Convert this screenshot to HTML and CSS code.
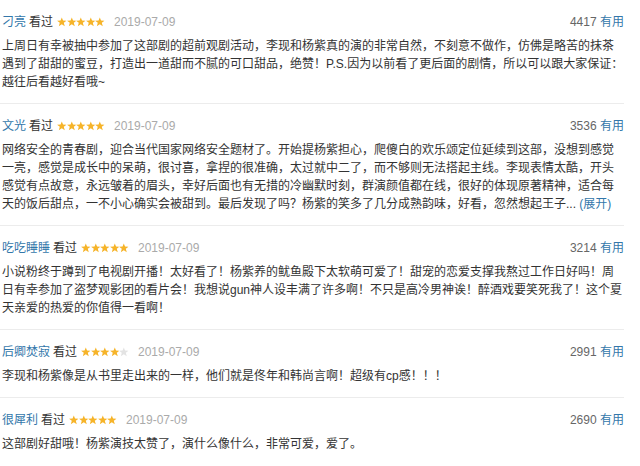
FILE: index.html
```html
<!DOCTYPE html>
<html lang="zh-CN">
<head>
    <meta charset="UTF-8">
    <title>短评</title>
    <link rel="stylesheet" href="styles.css">
</head>
<body>
    <svg class="defs" width="0" height="0">
        <symbol id="star" viewBox="0 0 10 10">
            <polygon points="5,0.2 6.3,3.5 9.9,3.6 7.1,5.8 8.1,9.4 5,7.3 1.9,9.4 2.9,5.8 0.1,3.6 3.7,3.5"/>
        </symbol>
    </svg>

    <div class="comments">
        <div class="comment">
            <div class="comment-info">
                <a class="name">刁亮</a>
                <span class="watched">看过</span>
                <span class="stars"><svg class="on"><use href="#star"/></svg><svg class="on"><use href="#star"/></svg><svg class="on"><use href="#star"/></svg><svg class="on"><use href="#star"/></svg><svg class="on"><use href="#star"/></svg></span>
                <span class="time">2019-07-09</span>
                <span class="votes"><span class="count">4417</span> <a>有用</a></span>
            </div>
            <p class="short">上周日有幸被抽中参加了这部剧的超前观剧活动，李现和杨紫真的演的非常自然，不刻意不做作，仿佛是略苦的抹茶<br>遇到了甜甜的蜜豆，打造出一道甜而不腻的可口甜品，绝赞！P.S.因为以前看了更后面的剧情，所以可以跟大家保证：<br>越往后看越好看哦~</p>
        </div>

        <div class="comment">
            <div class="comment-info">
                <a class="name">文光</a>
                <span class="watched">看过</span>
                <span class="stars"><svg class="on"><use href="#star"/></svg><svg class="on"><use href="#star"/></svg><svg class="on"><use href="#star"/></svg><svg class="on"><use href="#star"/></svg><svg class="on"><use href="#star"/></svg></span>
                <span class="time">2019-07-09</span>
                <span class="votes"><span class="count">3536</span> <a>有用</a></span>
            </div>
            <p class="short">网络安全的青春剧，迎合当代国家网络安全题材了。开始提杨紫担心，爬傻白的欢乐颂定位延续到这部，没想到感觉<br>一亮，感觉是成长中的呆萌，很讨喜，拿捏的很准确，太过就中二了，而不够则无法搭起主线。李现表情太酷，开头<br>感觉有点故意，永远皱着的眉头，幸好后面也有无措的冷幽默时刻，群演颜值都在线，很好的体现原著精神，适合每<br>天的饭后甜点，一不小心确实会被甜到。最后发现了吗？杨紫的笑多了几分成熟韵味，好看，忽然想起王子... <a class="more">(展开)</a></p>
        </div>

        <div class="comment">
            <div class="comment-info">
                <a class="name">吃吃睡睡</a>
                <span class="watched">看过</span>
                <span class="stars"><svg class="on"><use href="#star"/></svg><svg class="on"><use href="#star"/></svg><svg class="on"><use href="#star"/></svg><svg class="on"><use href="#star"/></svg><svg class="on"><use href="#star"/></svg></span>
                <span class="time">2019-07-09</span>
                <span class="votes"><span class="count">3214</span> <a>有用</a></span>
            </div>
            <p class="short">小说粉终于蹲到了电视剧开播！太好看了！杨紫养的鱿鱼殿下太软萌可爱了！甜宠的恋爱支撑我熬过工作日好吗！周<br>日有幸参加了盗梦观影团的看片会！我想说gun神人设丰满了许多啊！不只是高冷男神诶！醉酒戏要笑死我了！这个夏<br>天亲爱的热爱的你值得一看啊！</p>
        </div>

        <div class="comment">
            <div class="comment-info">
                <a class="name">后卿焚寂</a>
                <span class="watched">看过</span>
                <span class="stars"><svg class="on"><use href="#star"/></svg><svg class="on"><use href="#star"/></svg><svg class="on"><use href="#star"/></svg><svg class="on"><use href="#star"/></svg><svg class="off"><use href="#star"/></svg></span>
                <span class="time">2019-07-09</span>
                <span class="votes"><span class="count">2991</span> <a>有用</a></span>
            </div>
            <p class="short">李现和杨紫像是从书里走出来的一样，他们就是佟年和韩尚言啊！超级有cp感！！！</p>
        </div>

        <div class="comment">
            <div class="comment-info">
                <a class="name">很犀利</a>
                <span class="watched">看过</span>
                <span class="stars"><svg class="on"><use href="#star"/></svg><svg class="on"><use href="#star"/></svg><svg class="on"><use href="#star"/></svg><svg class="on"><use href="#star"/></svg><svg class="on"><use href="#star"/></svg></span>
                <span class="time">2019-07-09</span>
                <span class="votes"><span class="count">2690</span> <a>有用</a></span>
            </div>
            <p class="short">这部剧好甜哦！杨紫演技太赞了，演什么像什么，非常可爱，爱了。</p>
        </div>
    </div>
</body>
</html>
```

FILE: styles.css
```css
body, html {
    margin: 0;
    padding: 0;
    background-color: #fff;
    overflow: hidden;
}
.defs {
    position: absolute;
    width: 0;
    height: 0;
}
.comments {
    width: 624px;
    font-family: "Liberation Sans", "Noto Sans CJK SC", sans-serif;
    font-size: 12px;
    color: #333;
}
.comment {
    padding: 13px 0 12px 2px;
    border-bottom: 1px solid #ececec;
}
.comment:last-child {
    border-bottom: none;
}
.comment-info {
    display: flex;
    align-items: center;
    height: 18px;
    line-height: 18px;
}
.name {
    color: #37a;
    margin-right: 3px;
}
.watched {
    color: #333;
    margin-right: 4px;
}
.stars {
    display: flex;
    margin-right: 9px;
}
.stars svg {
    width: 9.6px;
    height: 10px;
}
.stars .on {
    fill: #f6b42a;
}
.stars .off {
    fill: #e3e3e3;
}
.time {
    color: #aaa;
}
.votes {
    margin-left: auto;
    color: #666;
}
.votes a {
    color: #37a;
}
.short {
    margin: 6px 0 0;
    line-height: 18px;
    white-space: nowrap;
}
.more {
    color: #37a;
}
```
